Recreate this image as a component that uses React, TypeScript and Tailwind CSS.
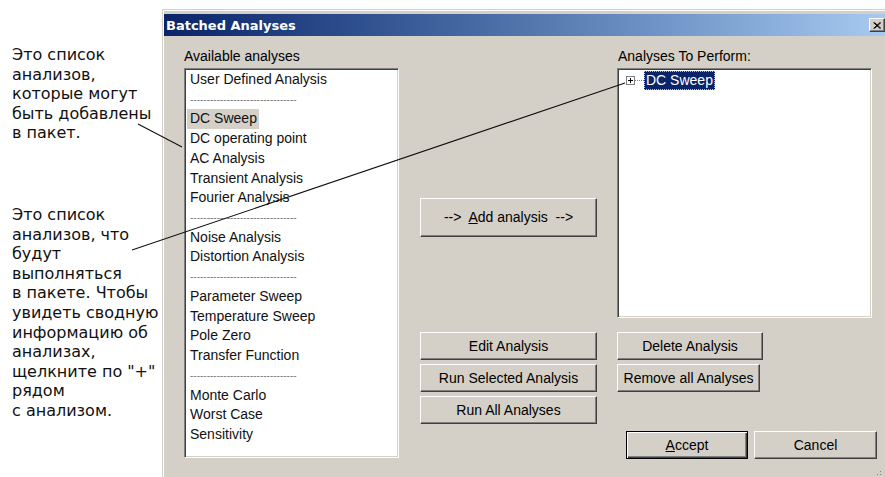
import React from "react";

const SEP = "__sep__";
const items = [
  "User Defined Analysis",
  SEP,
  "DC Sweep",
  "DC operating point",
  "AC Analysis",
  "Transient Analysis",
  "Fourier Analysis",
  SEP,
  "Noise Analysis",
  "Distortion Analysis",
  SEP,
  "Parameter Sweep",
  "Temperature Sweep",
  "Pole Zero",
  "Transfer Function",
  SEP,
  "Monte Carlo",
  "Worst Case",
  "Sensitivity",
];

const block1 = ["Это список", "анализов,", "которые могут", "быть добавлены", "в пакет."];
const block2 = [
  "Это список",
  "анализов, что",
  "будут",
  "выполняться",
  "в пакете. Чтобы",
  "увидеть сводную",
  "информацию об",
  "анализах,",
  "щелкните по \"+\"",
  "рядом",
  "с анализом.",
];

function Btn({ children, className = "" }: { children: React.ReactNode; className?: string }) {
  return (
    <div
      className={
        "flex items-center justify-center bg-[#d4d0c8] border border-t-white border-l-white border-b-[#404040] border-r-[#404040] shadow-[inset_-1px_-1px_0_#808080] text-[14px] text-black whitespace-nowrap " +
        className
      }
    >
      {children}
    </div>
  );
}

function Sunken({ children, className = "" }: { children?: React.ReactNode; className?: string }) {
  return (
    <div
      className={
        "bg-white border border-t-[#808080] border-l-[#808080] border-b-white border-r-white shadow-[inset_1px_1px_0_#404040,inset_-1px_-1px_0_#d4d0c8] p-[1px] " +
        className
      }
    >
      {children}
    </div>
  );
}

export default function App() {
  return (
    <div className="relative w-[885px] h-[477px] overflow-hidden bg-white flex">
      {/* annotations */}
      <div className="w-[162px] shrink-0 pl-[12px] pt-[45px] font-['DejaVu_Sans',sans-serif] text-[16px] leading-[19.6px] text-[#111]">
        {block1.map((l, i) => (
          <div key={i} className="whitespace-nowrap h-[19.6px]">
            {l}
          </div>
        ))}
        <div className="mt-[62px]">
          {block2.map((l, i) => (
            <div key={i} className="whitespace-nowrap h-[19.6px]">
              {l}
            </div>
          ))}
        </div>
      </div>

      {/* dialog */}
      <div className="relative mt-[9px] w-[724px] h-[480px] shrink-0 bg-[#d4d0c8] p-[1px] font-['Liberation_Sans',Arial,sans-serif]">
        <div className="h-full border-t border-l border-t-white border-l-white pt-[3px]">
          {/* title bar */}
          <div className="h-[22px] flex items-center justify-between bg-gradient-to-r from-[#0a246a] to-[#a6caf0] pl-[2px]">
            <span className="font-['DejaVu_Sans',sans-serif] font-bold text-[13px] text-white leading-none">
              Batched Analyses
            </span>
            <div className="w-[16px] h-[14px] bg-[#d4d0c8] border border-t-white border-l-white border-b-[#404040] border-r-[#404040] shadow-[inset_-1px_-1px_0_#808080] flex items-center justify-center">
              <svg width="8" height="7" viewBox="0 0 8 7">
                <path d="M0.5 0.5 L7 6.5 M1.5 0.5 L8 6.5 M7 0.5 L0.5 6.5 M8 0.5 L1.5 6.5" stroke="#000" strokeWidth="1" />
              </svg>
            </div>
          </div>

          {/* body */}
          <div className="flex pl-[20px] pt-[10px]">
            {/* col 1 */}
            <div className="w-[215px] shrink-0">
              <div className="h-[22px] leading-[20px] text-[14px] text-black whitespace-nowrap">Available analyses</div>
              <Sunken className="h-[390px]">
                {items.map((it, i) =>
                  it === SEP ? (
                    <div key={i} className="h-[19.72px] flex items-center">
                      <span className="ml-[4px] text-[10px] leading-none text-[#7a7a7a] whitespace-nowrap tracking-normal">
                        --------------------------------
                      </span>
                    </div>
                  ) : (
                    <div key={i} className="h-[19.72px] flex">
                      <span
                        className={
                          "ml-[1px] pl-[3px] pr-[2px] text-[14px] leading-[19.72px] text-[#111] whitespace-nowrap " +
                          (it === "DC Sweep" ? "bg-[#d4d0c8]" : "")
                        }
                      >
                        {it}
                      </span>
                    </div>
                  )
                )}
              </Sunken>
            </div>

            {/* col 2 */}
            <div className="w-[177px] shrink-0 ml-[21px] flex flex-col">
              <Btn className="mt-[152px] h-[39px]">
                <span>
                  --&gt;&nbsp; <span className="underline">A</span>dd analysis&nbsp; --&gt;
                </span>
              </Btn>
              <Btn className="mt-[95px] h-[28px]">Edit Analysis</Btn>
              <Btn className="mt-[4px] h-[28px]">Run Selected Analysis</Btn>
              <Btn className="mt-[4px] h-[28px]">Run All Analyses</Btn>
            </div>

            {/* col 3 */}
            <div className="ml-[20px] shrink-0 flex flex-col">
              <div className="h-[22px] leading-[20px] text-[14px] text-black whitespace-nowrap pl-[1px]">Analyses To Perform:</div>
              <Sunken className="w-[255px] h-[250px]">
                <div className="h-[20px] flex items-center pl-[7px]">
                  <div className="w-[9px] h-[9px] border border-[#808080] bg-white relative shrink-0">
                    <div className="absolute left-[1px] top-[3px] w-[5px] h-[1px] bg-black" />
                    <div className="absolute left-[3px] top-[1px] w-[1px] h-[5px] bg-black" />
                  </div>
                  <div className="w-[9px] border-t border-dotted border-[#808080]" />
                  <span className="h-[19px] leading-[17px] px-[1px] bg-[#0a246a] text-white text-[14px] whitespace-nowrap border border-dotted border-[#d8c67c]">
                    DC Sweep
                  </span>
                </div>
              </Sunken>
              <Btn className="mt-[14px] w-[146px] h-[28px]">Delete Analysis</Btn>
              <Btn className="mt-[4px] w-[143px] h-[28px]">Remove all Analyses</Btn>
              <div className="mt-[39px] flex">
                <div className="ml-[9px] w-[122px] h-[28px] border border-black bg-[#d4d0c8] shadow-[inset_1px_1px_0_#fff,inset_-1px_-1px_0_#404040,inset_-2px_-2px_0_#808080] flex items-center justify-center text-[14px] text-black">
                  <span>
                    <span className="underline">A</span>ccept
                  </span>
                </div>
                <Btn className="ml-[6px] w-[123px] h-[28px]">Cancel</Btn>
              </div>
            </div>
          </div>
        </div>
      </div>

      {/* resize grip dots */}
      <svg className="absolute left-[872px] top-[466px] pointer-events-none" width="12" height="11" viewBox="0 0 12 11">
        <rect x="8" y="5" width="1" height="1" fill="#808080" />
        <rect x="5" y="8" width="1" height="1" fill="#808080" />
        <rect x="8" y="8" width="1" height="1" fill="#808080" />
      </svg>

      {/* pointer lines */}
      <svg className="absolute left-0 top-0 pointer-events-none" width="885" height="477" viewBox="0 0 885 477">
        <line x1="138" y1="124" x2="182" y2="147" stroke="#111" strokeWidth="1.1" />
        <line x1="132" y1="250" x2="625" y2="83" stroke="#111" strokeWidth="1.1" />
      </svg>
    </div>
  );
}
